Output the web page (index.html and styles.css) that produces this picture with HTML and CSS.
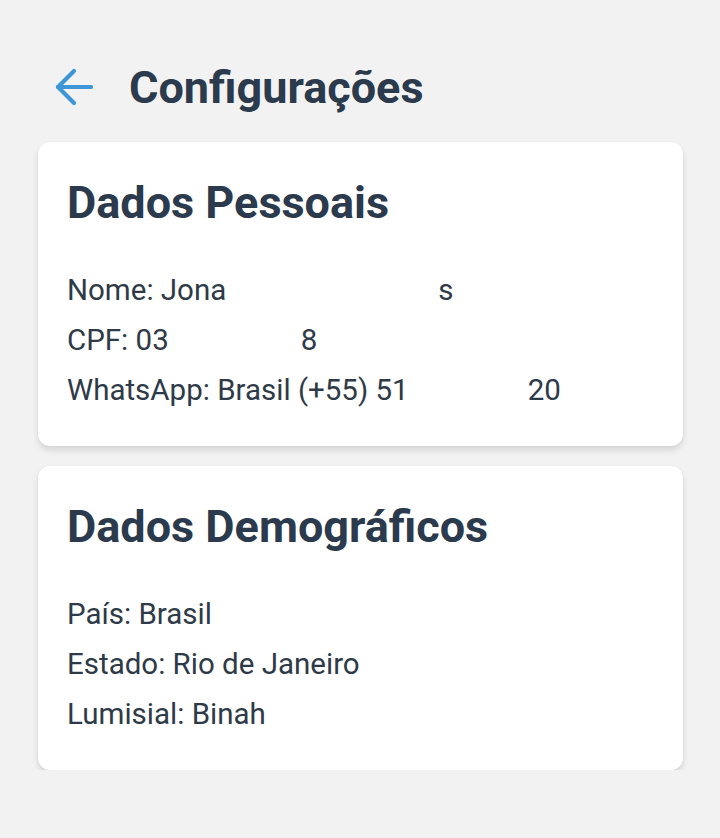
FILE: index.html
```html
<!DOCTYPE html>
<html lang="pt-BR">
<head>
<meta charset="utf-8">
<title>Configurações</title>
<link rel="stylesheet" href="styles.css">
</head>
<body>
<div class="page">
  <header class="topbar">
    <button class="back" aria-label="Voltar">
      <svg width="38" height="38" viewBox="0 0 38 38" fill="none" stroke="#3d97d6" stroke-width="4.2" stroke-linecap="round" stroke-linejoin="round">
        <path d="M36 19H3"/>
        <path d="M19 3L3 19L19 35"/>
      </svg>
    </button>
    <h1 class="title">Configurações</h1>
  </header>

  <section class="card">
    <h2 class="card-title">Dados Pessoais</h2>
    <div class="rows">
      <p class="row">Nome: Jona<span class="redact r1"></span>s</p>
      <p class="row">CPF: 03<span class="redact r2"></span>8</p>
      <p class="row">WhatsApp: Brasil (+55) 51<span class="redact r3"></span>20</p>
    </div>
  </section>

  <section class="card">
    <h2 class="card-title">Dados Demográficos</h2>
    <div class="rows">
      <p class="row">País: Brasil</p>
      <p class="row">Estado: Rio de Janeiro</p>
      <p class="row">Lumisial: Binah</p>
    </div>
  </section>
</div>
</body>
</html>
```

FILE: styles.css
```css
* { box-sizing: border-box; }
html, body {
  margin: 0;
  padding: 0;
  background: #f2f2f2;
  font-family: Roboto, "Noto Sans", sans-serif;
  color: #2c3e50;
}
.page {
  padding: 58px 37px 0 38px;
  display: flex;
  flex-direction: column;
  gap: 20px;
}
.topbar {
  display: flex;
  align-items: center;
  gap: 36px;
  height: 58px;
  margin-bottom: 6px;
  padding-left: 17px;
}
.back {
  border: 0;
  background: none;
  padding: 0;
  display: flex;
  width: 38px;
  height: 38px;
}
.title {
  margin: 0;
  font-size: 45px;
  font-weight: 700;
  color: #2b3a4c;
}
.card {
  background: #fff;
  border-radius: 12px;
  box-shadow: 0 4px 6px rgba(0,0,0,0.12), 0 0 2px rgba(0,0,0,0.05);
  padding: 35px 29px 38px 29px;
  height: 304px;
}
.card-title {
  margin: 0 0 36px 0;
  font-size: 45px;
  font-weight: 700;
  line-height: 52px;
  color: #2b3a4c;
}
.rows {
  display: flex;
  flex-direction: column;
}
.row {
  margin: 0;
  font-size: 29.5px;
  line-height: 50px;
  color: #2e3a47;
  white-space: nowrap;
}
.redact {
  display: inline-block;
  height: 30px;
  vertical-align: middle;
  background: #fff;
}
.r1 { width: 212px; }
.r2 { width: 132px; }
.r3 { width: 119px; }
```
